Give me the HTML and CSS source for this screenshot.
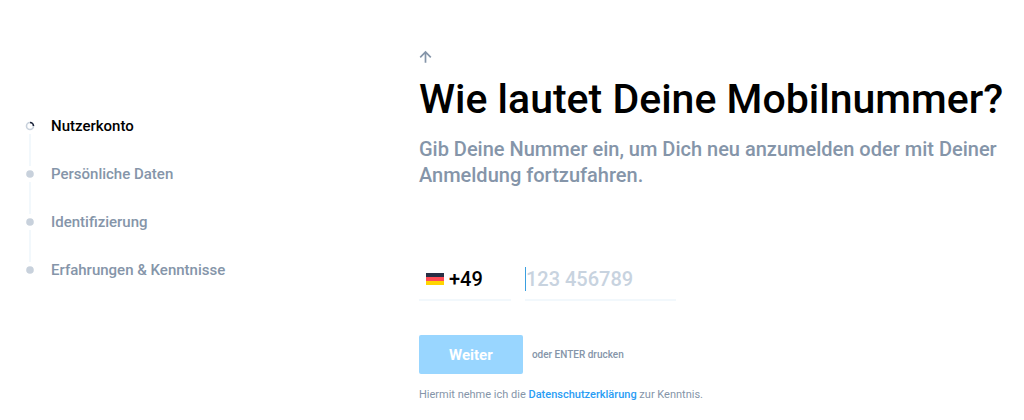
FILE: index.html
```html
<!DOCTYPE html>
<html lang="de">
<head>
    <meta charset="UTF-8">
    <meta name="viewport" content="width=device-width, initial-scale=1.0">
    <title>Mobilnummer</title>
    <link rel="stylesheet" href="styles.css">
</head>
<body>
    <div class="page">
        <nav class="sidebar">
            <ol class="steps">
                <li class="step active">
                    <svg class="marker" viewBox="0 0 10 10" fill="none" stroke-width="1.6">
                        <circle cx="5" cy="5" r="3.5" stroke="#c8d1dc"/>
                        <path d="M5 1.5A3.5 3.5 0 0 1 8.5 5" stroke="#1c2338"/>
                    </svg>
                    <span>Nutzerkonto</span>
                </li>
                <li class="step">
                    <svg class="marker" viewBox="0 0 10 10"><circle cx="5" cy="5" r="3.8" fill="#c8d1dc"/></svg>
                    <span>Persönliche Daten</span>
                </li>
                <li class="step">
                    <svg class="marker" viewBox="0 0 10 10"><circle cx="5" cy="5" r="3.8" fill="#c8d1dc"/></svg>
                    <span>Identifizierung</span>
                </li>
                <li class="step">
                    <svg class="marker" viewBox="0 0 10 10"><circle cx="5" cy="5" r="3.8" fill="#c8d1dc"/></svg>
                    <span>Erfahrungen &amp; Kenntnisse</span>
                </li>
            </ol>
        </nav>

        <main class="content">
            <button type="button" class="back-btn" aria-label="Zurück">
                <svg width="14" height="14" viewBox="0 0 14 14" fill="none" stroke="#8595a9" stroke-width="1.7">
                    <path d="M6.5 12.8V2M1.2 7.3L6.5 2l5.3 5.3"/>
                </svg>
            </button>
            <h1>Wie lautet Deine Mobilnummer?</h1>
            <p class="subtitle">Gib Deine Nummer ein, um Dich neu anzumelden oder mit Deiner Anmeldung fortzufahren.</p>

            <form>
                <div class="phone-row">
                    <div class="field country-field">
                        <svg class="flag" width="18" height="12" viewBox="0 0 18 12">
                            <rect width="18" height="4" fill="#272f45"/>
                            <rect y="4" width="18" height="4" fill="#ff4b55"/>
                            <rect y="8" width="18" height="4" fill="#ffd500"/>
                        </svg>
                        <select id="country" aria-label="Ländervorwahl">
                            <option>+49</option>
                        </select>
                    </div>
                    <div class="field number-field">
                        <input type="tel" id="number" placeholder="123 456789" aria-label="Mobilnummer">
                        <span class="caret"></span>
                    </div>
                </div>

                <div class="submit-row">
                    <button type="submit" class="submit-btn">Weiter</button>
                    <span class="hint">oder ENTER drucken</span>
                </div>
            </form>

            <p class="privacy">Hiermit nehme ich die <a href="#">Datenschutzerklärung</a> zur Kenntnis.</p>
        </main>
    </div>
</body>
</html>
```

FILE: styles.css
```css
* {
    box-sizing: border-box;
}

body {
    margin: 0;
    background-color: #fff;
    color: #8595a9;
    font-family: Roboto, "Liberation Sans", sans-serif;
    font-weight: 500;
}

.page {
    display: grid;
    grid-template-columns: 9fr 13fr;
}

/* Progress */
.sidebar {
    padding: 114px 24px 0 25px;
}

.steps {
    list-style: none;
    margin: 0;
    padding: 0;
}

.step {
    position: relative;
    display: flex;
    align-items: center;
    gap: 16px;
    height: 24px;
    margin-bottom: 24px;
    font-size: 15px;
}

.step.active {
    color: #000;
}

.step:not(:last-child)::after {
    content: "";
    position: absolute;
    top: 20px;
    left: 4px;
    width: 2px;
    height: 32px;
    background-color: #f2f8fc;
}

.marker {
    width: 10px;
    height: 10px;
}

/* Form */
.content {
    min-width: 0;
    padding: 50px 16px 16px 0;
}

.back-btn {
    display: block;
    height: 14px;
    padding: 0;
    border: none;
    background: none;
    cursor: pointer;
}

h1 {
    margin: 10px 0 0;
    color: #000;
    font-size: 41px;
    font-weight: 500;
    line-height: 50px;
}

.subtitle {
    margin: 12px 0 0;
    font-size: 20px;
    line-height: 26px;
}

.phone-row {
    display: flex;
    gap: 14px;
    margin-top: 70px;
}

.field {
    display: flex;
    align-items: center;
    height: 43px;
    border-bottom: 2px solid #f2f8fc;
}

.country-field {
    width: 92px;
    padding-left: 7px;
    gap: 5px;
}

.number-field {
    position: relative;
    width: 151px;
}

.field select,
.field input {
    width: 100%;
    height: 28px;
    padding: 0;
    border: none;
    outline: none;
    background: none;
    color: #000;
    font: inherit;
    font-size: 20px;
    appearance: none;
}

.flag {
    flex: none;
}

.field input {
    padding-left: 1px;
    caret-color: transparent;
}

.field input::placeholder {
    color: #c8d3df;
}

.caret {
    position: absolute;
    top: 9px;
    left: 0;
    width: 1px;
    height: 24px;
    background-color: #3a9fe0;
}

.submit-row {
    display: flex;
    align-items: center;
    gap: 9px;
    margin-top: 34px;
}

.submit-btn {
    width: 104px;
    height: 39px;
    border: none;
    border-radius: 2px;
    background-color: #99d6ff;
    color: #fff;
    font: inherit;
    font-size: 15px;
    font-weight: 700;
    cursor: pointer;
}

.hint,
.privacy {
    font-weight: 400;
    line-height: 16px;
}

.hint {
    font-size: 10px;
    font-weight: 500;
}

.privacy {
    margin: 13px 0 0;
    font-size: 11px;
}

.privacy a {
    color: #2a9df4;
    font-weight: 500;
    text-decoration: none;
}
```
